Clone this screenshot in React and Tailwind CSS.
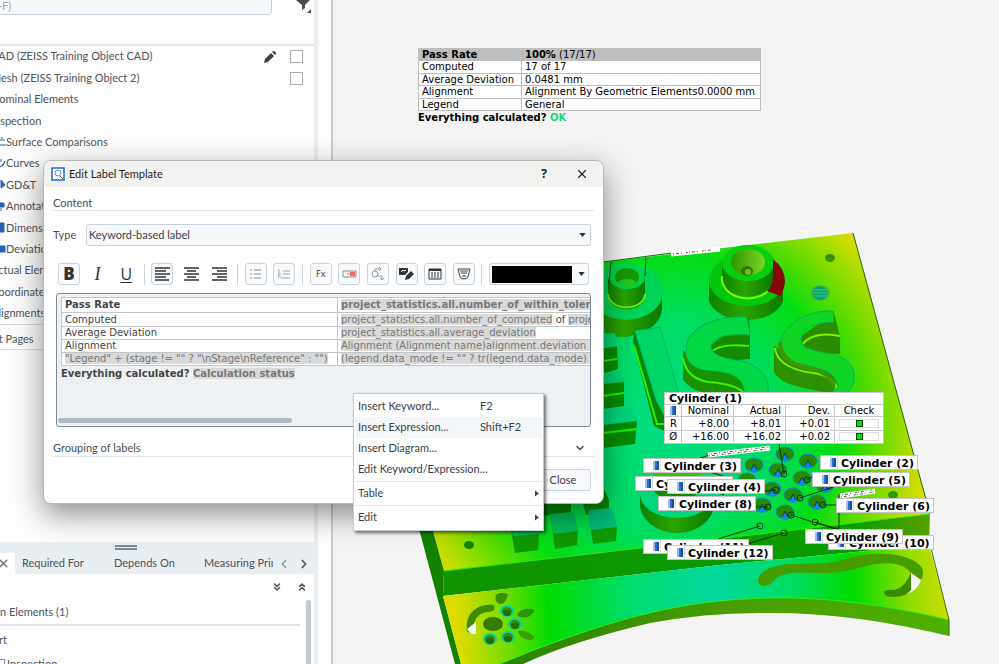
import React, { useState } from 'react';
import { ChevronDown, ChevronLeft, ChevronRight, ChevronsDown, ChevronsUp, X } from 'lucide-react';

const treeItems = [
  { label: 'CAD (ZEISS Training Object CAD)', checkbox: true, editable: true },
  { label: 'Mesh (ZEISS Training Object 2)', checkbox: true },
  { label: 'Nominal Elements' },
  { label: 'Inspection' },
  { label: 'Surface Comparisons', icon: 'M0 3h5M0 8h6M2 0v2' },
  { label: 'Curves', icon: 'M0 9Q4 8 5 3M1 1v3' },
  { label: 'GD&T', icon: 'M1 1l4 5l-4 3z' },
  { label: 'Annotations', icon: 'M0 2h4v4h-4zM1 7v3' },
  { label: 'Dimensions', icon: 'M0 1h4v9h-4z' },
  { label: 'Deviation Labels', icon: 'M0 2h5v6h-5M3 4v2' },
  { label: 'Actual Elements' },
  { label: 'Coordinate Systems' },
  { label: 'Alignments' },
];

const callouts = [
  { label: 'Cylinder (7)', pos: 'left-[302px] top-[476px]' },
  { label: 'Cylinder (3)', pos: 'left-[310px] top-[458px]' },
  { label: 'Cylinder (4)', pos: 'left-[334px] top-[479px]' },
  { label: 'Cylinder (8)', pos: 'left-[325px] top-[496px]' },
  { label: 'Cylinder (2)', pos: 'left-[487px] top-[455px]' },
  { label: 'Cylinder (5)', pos: 'left-[479px] top-[472px]' },
  { label: 'Cylinder (6)', pos: 'left-[503px] top-[498px]' },
  { label: 'Cylinder (10)', pos: 'left-[495px] top-[535px]' },
  { label: 'Cylinder (9)', pos: 'left-[472px] top-[529px]' },
  { label: 'Cylinder (11)', pos: 'left-[310px] top-[539px]' },
  { label: 'Cylinder (12)', pos: 'left-[334px] top-[545px]' },
];

const pits = [
  [785, 454], [808, 461], [754, 465], [778, 470], [802, 478], [747, 480],
  [772, 489], [825, 485], [793, 495], [817, 502], [762, 505], [785, 512],
];

const probes = [
  [784, 474, 779, 444], [807, 480, 814, 476], [776, 490, 757, 492], [800, 498, 833, 487],
  [823, 505, 837, 505], [768, 507, 754, 507], [791, 515, 838, 530], [815, 522, 838, 529],
  [760, 526, 718, 539], [784, 533, 747, 544],
];

const cadIcon = (
  <svg viewBox="0 0 6 9" className="h-[9px] w-[6px] shrink-0">
    <rect x="0" y="0" width="6" height="9" fill="#2b6cc8" />
    <rect x="0" y="0" width="2" height="9" fill="#9dbfea" />
    <rect x="4" y="0" width="2" height="9" fill="#174ea6" />
  </svg>
);

function PartModel() {
  return (
    <svg viewBox="333 0 666 664" className="absolute left-0 top-0 h-[664px] w-[666px]" aria-hidden="true">
      <defs>
        <radialGradient id="plate" gradientUnits="userSpaceOnUse" cx="665" cy="425" r="280">
          <stop offset="0" stopColor="#00dc82" />
          <stop offset="0.38" stopColor="#00dc62" />
          <stop offset="0.62" stopColor="#05dc12" />
          <stop offset="0.76" stopColor="#62dc00" />
          <stop offset="0.95" stopColor="#dcdc00" />
        </radialGradient>
        <linearGradient id="shelf" gradientUnits="userSpaceOnUse" x1="445" y1="640" x2="945" y2="600">
          <stop offset="0.03" stopColor="#dcdc00" />
          <stop offset="0.12" stopColor="#78dc00" />
          <stop offset="0.21" stopColor="#00dc00" />
          <stop offset="0.38" stopColor="#00dc70" />
          <stop offset="0.55" stopColor="#00d89e" />
          <stop offset="0.7" stopColor="#00dc60" />
          <stop offset="0.82" stopColor="#00dc00" />
          <stop offset="0.93" stopColor="#90dc00" />
          <stop offset="1" stopColor="#c8dc00" />
        </linearGradient>
        <linearGradient id="front" x1="0" x2="1" y1="0" y2="0">
          <stop offset="0" stopColor="#109400" />
          <stop offset="0.85" stopColor="#0a9c00" />
          <stop offset="1" stopColor="#5aa000" />
        </linearGradient>
        <linearGradient id="rim" x1="0" x2="1" y1="0" y2="0">
          <stop offset="0" stopColor="#2c8000" />
          <stop offset="0.5" stopColor="#489c00" />
          <stop offset="1" stopColor="#50b000" />
        </linearGradient>
        <linearGradient id="wall" x1="0" x2="1" y1="0" y2="0">
          <stop offset="0" stopColor="#0a8200" />
          <stop offset="0.45" stopColor="#2ca400" />
          <stop offset="1" stopColor="#087800" />
        </linearGradient>
        <linearGradient id="cone" x1="0" x2="1" y1="0" y2="0">
          <stop offset="0" stopColor="#2f9400" />
          <stop offset="1" stopColor="#7cd824" />
        </linearGradient>
      </defs>

      {/* Base body */}
      <path d="M603 262L853 233L930 514L444 571L433 531L410 450Z" fill="url(#plate)" />
      <path d="M603 262L672 253M853 233L930 514" stroke="#1c6a10" strokeWidth="1" fill="none" />
      <path d="M410 495L424 495L433 531L444 571L443 596L461 664L455 664Z" fill="#128200" />
      <path d="M444 571L930 514L929 545L720 565L443 596Z" fill="url(#front)" />
      <path d="M444 571L930 514" stroke="#28e800" strokeWidth="1" />
      <path d="M949 620Q850 596 767 598Q700 599 633 617Q567 635 500 664H523Q570 642 650 623Q710 612 767 613Q850 612 949 636Z" fill="url(#rim)" />
      <path d="M443 596L720 565L929 545L949 620Q850 596 767 598Q700 599 633 617Q567 635 500 664H461Z" fill="url(#shelf)" />
      <path d="M949 620Q850 596 767 598Q700 599 633 617Q567 635 500 664" fill="none" stroke="#20ee10" strokeWidth="1" />
      <path d="M931 548L949 620V636" fill="none" stroke="#397000" strokeWidth="1" />

      {/* Flat boss with pin, back left */}
      <path d="M590 293V314Q598 338 626 337Q662 330 662 307V290Z" fill="url(#wall)" />
      <ellipse cx="626" cy="292" rx="37" ry="28" fill="#00d458" />
      <path d="M608 278V296A18 13 0 0 0 645 296V278Z" fill="url(#wall)" />
      <path d="M608 294A18 13 0 0 0 645 294" fill="none" stroke="#68f000" strokeWidth="2" />
      <ellipse cx="627" cy="277" rx="18" ry="12" fill="#00d24c" />
      <ellipse cx="627" cy="277" rx="12" ry="9" fill="#159800" />
      <ellipse cx="627" cy="283" rx="9" ry="4" fill="#20c826" />
      <path d="M611 262L609 284M646 258L645 276" stroke="#054a10" strokeWidth="1" />

      {/* Countersunk boss, back right */}
      <path d="M709 280V301A38 25 0 0 0 783 301V282Z" fill="url(#wall)" />
      <ellipse cx="747" cy="280" rx="38" ry="26" fill="#00c80c" />
      <path d="M722 262V284A26 17 0 0 0 773 280V262Z" fill="url(#wall)" />
      <path d="M722 276A26 20 0 0 0 768 291" fill="none" stroke="#86f000" strokeWidth="2" />
      <ellipse cx="748" cy="263" rx="26" ry="18" fill="#08ce10" />
      <ellipse cx="748" cy="262" rx="17" ry="13" fill="url(#cone)" />
      <ellipse cx="747" cy="271" rx="6" ry="5" fill="#2c7c00" />
      <ellipse cx="748" cy="272" rx="3" ry="3" fill="#72be20" />
      <path d="M773 259Q785 268 785 282Q784 291 780 296L767 291Q773 285 773 277Z" fill="#870808" />

      {/* Single holes */}
      <ellipse cx="830" cy="258" rx="5" ry="4" fill="#349400" />
      <ellipse cx="820" cy="293" rx="10" ry="8" fill="#3fc428" />
      <ellipse cx="820" cy="293" rx="8" ry="7" fill="#12a068" />
      <path d="M813 290h14M812 293h16M813 296h14" stroke="#28cc98" strokeWidth="1" />
      <ellipse cx="893" cy="495" rx="5" ry="4" fill="#309800" />
      <ellipse cx="469" cy="545" rx="5" ry="4" fill="#128600" />

      {/* Raised lettering: side walls */}
      <path d="M749 318L750 334V359L710 362V346L745 318Z" fill="#168a00" />
      <path d="M749 346Q722 343 712 351" fill="none" stroke="#3cf000" strokeWidth="2" />
      <path d="M683 350V380Q690 389 704 393H745V384L740 372L700 366Z" fill="#189200" />
      <path d="M683 358Q686 378 708 382Q736 384 744 393" fill="none" stroke="#3cf000" strokeWidth="2" />
      <path d="M834 313L840 336V354L800 352L796 340Z" fill="#2c8c00" />
      <path d="M840 336Q812 330 800 347" fill="none" stroke="#80f000" strokeWidth="2" />
      <path d="M774 346V371Q778 382 800 387L832 394L842 370L798 360Z" fill="#2c9000" />
      <path d="M775 348Q777 366 806 372Q832 374 837 388" fill="none" stroke="#74f000" strokeWidth="2" />
      {/* Raised lettering: top faces */}
      <path d="M747 317C722 315 692 325 687 343C682 364 696 370 712 371C732 372 745 379 744 393H768C770 377 759 367 745 362C730 358 712 358 711 346C713 336 732 333 750 335Z" fill="#00d844" stroke="#00ac50" strokeWidth="1" />
      <path d="M833 311C812 310 786 321 781 340C778 355 787 361 800 364C821 368 838 372 838 389L828 394H845C856 388 858 370 847 361C836 352 819 354 805 347C796 338 801 323 834 322Z" fill="#10d424" stroke="#00b45c" strokeWidth="1" />
      <path d="M780 342Q780 362 808 368Q828 371 834 386" fill="none" stroke="#409800" strokeWidth="4" />
      <path d="M633 341L635 331L665 416L664 431L654 426Z" fill="#078400" />
      <path d="M634 345L657 424H664" fill="none" stroke="#26f000" strokeWidth="2" />
      <path d="M635 331L660 327L682 405L665 417L656 400Z" fill="#00d664" stroke="#00b86e" strokeWidth="1" />
      <path d="M603 348L617 346L618 369L603 374Z" fill="#058c00" />
      <path d="M603 334L615 333L618 346L603 348Z" fill="#00d46e" />
      <path d="M603 361L617 359" stroke="#1eee00" strokeWidth="2" />
      <path d="M603 383L624 381V406L603 409Z" fill="#058c00" />
      <path d="M603 373L621 371L624 382L603 384Z" fill="#00d46e" />
      <path d="M603 396L624 393" stroke="#1eee00" strokeWidth="2" />
      <path d="M603 424L637 420L635 444L603 448Z" fill="#058c00" />
      <path d="M603 411L633 408L637 421L603 425Z" fill="#00d47c" />
      <path d="M603 433L637 429" stroke="#1eee00" strokeWidth="2" />

      {/* Front cubes */}
      <path d="M540 500H571V512L545 516ZM582 500H609V509L586 515ZM600 480L609 500V507H600Z" fill="#078600" />
      <path d="M511 530H540V536L513 538Z" fill="#00c852" />
      <path d="M511 530L513 536L539 534L538 550L515 553Z" fill="#109600" />
      <path d="M550 514L578 531L577 545L555 549Z" fill="#109600" />
      <path d="M550 514L574 512L578 531L553 534Z" fill="#00bc5c" />
      <path d="M588 510L617 527L616 541L593 544Z" fill="#0e9a00" />
      <path d="M588 510L612 508L617 527L591 530Z" fill="#00bc78" />

      {/* Ring behind the callouts */}
      <path d="M640 494V504A37 29 0 0 0 714 504V494Z" fill="url(#wall)" />
      <ellipse cx="677" cy="494" rx="37" ry="24" fill="#00d67c" />
      <ellipse cx="677" cy="474" rx="24" ry="14" fill="#3ac400" />
      <path d="M653 476V486A24 15 0 0 0 701 486V476Z" fill="#0c9000" />

      {/* Hole pattern */}
      {pits.map(([cx, cy]) => (
        <g key={`${cx}-${cy}`}>
          <ellipse cx={cx} cy={cy} rx="9" ry="7" fill="#238c00" stroke="#1c84c8" strokeWidth="1" />
          <path d={`M${cx - 5} ${cy + 6}L${cx} ${cy + 1}L${cx + 5} ${cy + 6}L${cx} ${cy + 8}Z`} fill="#1488e0" />
          <path d={`M${cx - 3} ${cy + 5}L${cx} ${cy - 1}L${cx + 3} ${cy + 5}`} fill="none" stroke="#123c64" strokeWidth="1" />
        </g>
      ))}
      <g fill="none" stroke="#04380c" strokeWidth="1">
        {probes.map(([cx, cy, x2, y2]) => (
          <g key={`${cx}-${cy}`}>
            <circle cx={cx} cy={cy} r="3" />
            <path d={`M${cx} ${cy}L${x2} ${y2}`} />
          </g>
        ))}
        <path d="M839 494V530M700 458L713 454M710 472L726 477M710 490L724 495" />
      </g>

      {/* Labels seen edge-on */}
      <g fill="none" strokeWidth="5" stroke="#ffffff">
        <path d="M708 455L770 448" />
        <path d="M840 496L875 491" />
        <path d="M671 254L720 249" />
      </g>
      <g fill="none" strokeWidth="1" stroke="#4a5a4a" strokeDasharray="1 2 3 2 1 4 2 1">
        <path d="M709 456L769 449M711 454L768 447" />
        <path d="M841 497L874 492M842 495L872 490" />
        <path d="M673 254L712 250" />
      </g>

      {/* Hole circle and slot on the shelf */}
      <path d="M491 608Q470 609 470 629" fill="none" stroke="#3d8c00" strokeWidth="7" strokeLinecap="round" />
      <path d="M467 629Q471 626 476 622V634Q470 635 467 629Z" fill="#f4f4f4" />
      <ellipse cx="493" cy="624" rx="10" ry="7" fill="#347c00" />
      <path d="M496 595Q500 591 508 594Q506 605 499 604Q494 601 496 595Z" fill="#3a9000" />
      <path d="M517 614Q521 608 533 609Q536 612 528 617Q519 619 517 614Z" fill="#2b9600" />
      <path d="M518 631Q526 630 534 636Q535 640 529 640Q519 638 518 631Z" fill="#3c9c00" />
      {[[507, 611], [515, 624], [508, 637], [490, 639]].map(([cx, cy]) => (
        <g key={`${cx}-${cy}`}>
          <ellipse cx={cx} cy={cy} rx="6" ry="5" fill="#3c8c00" stroke="#00d2a4" strokeWidth="2" />
          <ellipse cx={cx} cy={cy + 2} rx="4" ry="3" fill="#256c00" />
        </g>
      ))}
      <path d="M758 581C759 570 774 565 790 564C808 563 826 565 842 560C860 554 876 553 888 554C906 555 924 563 923 573Q923 577 921 580L911 573C904 563 890 562 875 564C856 568 842 574 820 573C800 572 784 572 775 579Q771 586 764 586Q759 586 758 581Z" fill="#469c00" />
      <path d="M911 573L921 580Q918 590 907 594Z" fill="#f4f4f4" />
      <path d="M911 573V590Q906 597 894 597Q883 597 884 592Q886 589 893 590Q904 589 911 573Z" fill="#3c8a00" />
    </svg>
  );
}

function Callout({ label, pos }) {
  return (
    <div className={`absolute flex h-[15px] items-center border border-[#c4c4c4] bg-white text-[11px] leading-[15px] font-bold text-black ${pos}`}>
      <span className="flex h-full w-[17px] items-center justify-end border-r border-[#dcdcdc] pr-px">{cadIcon}</span>
      <span className="px-[3px] pt-px whitespace-nowrap">{label}</span>
    </div>
  );
}

function CylinderTable() {
  const rows = [['R', '+8.00', '+8.01', '+0.01'], ['Ø', '+16.00', '+16.02', '+0.02']];
  const cell = 'border border-[#c8c8c8] px-1 leading-[11px]';
  return (
    <table className="absolute left-[331px] top-[392px] h-[52px] w-[219px] table-fixed border-collapse bg-white text-[10px] text-black">
      <colgroup>
        <col className="w-[17px]" />
        <col className="w-[52px]" />
        <col className="w-[52px]" />
        <col className="w-[49px]" />
        <col className="w-[49px]" />
      </colgroup>
      <thead>
        <tr><th colSpan="5" className={`${cell} text-left text-[11px] font-bold`}>Cylinder (1)</th></tr>
        <tr className="text-right">
          <th className={cell}><span className="flex justify-center">{cadIcon}</span></th>
          <th className={`${cell} font-normal`}>Nominal</th>
          <th className={`${cell} font-normal`}>Actual</th>
          <th className={`${cell} font-normal`}>Dev.</th>
          <th className={`${cell} text-center font-normal`}>Check</th>
        </tr>
      </thead>
      <tbody>
        {rows.map((row) => (
          <tr key={row[0]} className="text-right">
            {row.map((value) => <td key={value} className={cell}>{value}</td>)}
            <td className={cell}>
              <div className="flex h-[9px] items-center justify-center border border-[#dcdcdc]">
                <div className="size-[7px] shrink-0 border border-[#064006] bg-[#00e400]" />
              </div>
            </td>
          </tr>
        ))}
      </tbody>
    </table>
  );
}

function ReportTable() {
  const rows = [
    ['Computed', '17 of 17'],
    ['Average Deviation', '0.0481 mm'],
    ['Alignment', 'Alignment By Geometric Elements0.0000 mm'],
    ['Legend', 'General'],
  ];
  const cell = 'border border-[#bebebe] px-[3px] leading-[11px] whitespace-nowrap';
  return (
    <div className="absolute left-[85px] top-[48px] text-[10px] text-black">
      <table className="h-[63px] w-[343px] border-collapse bg-white">
        <thead>
          <tr className="bg-[#bebebe] text-left">
            <th className={`${cell} w-[103px] font-bold`}>Pass Rate</th>
            <th className={`${cell} font-normal`}><b>100%</b> (17/17)</th>
          </tr>
        </thead>
        <tbody>
          {rows.map(([name, value]) => (
            <tr key={name}>
              <td className={cell}>{name}</td>
              <td className={cell}>{value}</td>
            </tr>
          ))}
        </tbody>
      </table>
      <p className="leading-[14px] font-bold">Everything calculated? <span className="text-[#16d47c]">OK</span></p>
    </div>
  );
}

function Sidebar() {
  return (
    <aside className="flex w-[333px] shrink-0 overflow-hidden border-r-2 border-[#c3ced8] bg-[#fdfdfd] text-[11px] text-[#4f5459]">
      <div className="flex w-[318px] shrink-0 flex-col border-r-4 border-[#e9eef2]">
        <div className="flex h-[44px] shrink-0 items-start overflow-hidden">
          <input
            aria-label="Search"
            placeholder="Search (Ctrl+F)"
            className="-mt-3 -ml-[67px] h-[27px] w-[339px] rounded-sm border border-[#c6d2dd] bg-[#f6f8fa] pt-2 pl-[6px] placeholder:text-[#a2a7ab]"
          />
          <svg viewBox="0 0 16 13" className="ml-6 h-[13px] w-[16px]" fill="#4b4b4b">
            <path d="M0 0H14L9 5V8L6 10V5ZM15 9V13H11Z" />
          </svg>
        </div>
        <div className="grid h-[280px] shrink-0 auto-rows-fr border-t-2 border-[#e1e7ed]">
          {treeItems.map((item) => (
            <div key={item.label} className="flex items-center overflow-hidden whitespace-nowrap">
              {item.icon && (
                <svg viewBox="0 0 6 11" className="h-[11px] w-[6px] shrink-0" fill="#2463b4" stroke="#2463b4">
                  <path d={item.icon} />
                </svg>
              )}
              <span className={item.icon ? 'grow' : '-ml-[9px] grow'}>{item.label}</span>
              {item.editable && (
                <svg viewBox="0 0 12 12" className="mr-[14px] size-3" fill="#424242">
                  <path d="M0 12L1 8L7 2L10 5L4 11ZM8 1L9 0Q12 0 12 3L11 4Z" />
                </svg>
              )}
              {item.checkbox && (
                <input type="checkbox" aria-label={item.label} className="mr-[11px] size-[13px] appearance-none border border-[#b0b0b0] bg-white" />
              )}
            </div>
          ))}
        </div>
        <div className="flex h-[26px] shrink-0 items-center border-y border-[#d3dde6] whitespace-nowrap">
          <span className="-ml-[30px] pt-1">Report Pages</span>
        </div>
        <div className="h-[192px] shrink-0" />
        <div className="flex h-[32px] shrink-0 flex-col bg-[#e9eef2]">
          <div className="mt-[3px] ml-[115px] h-[5px] w-[22px] shrink-0 border-y-2 border-[#7d8890]" />
          <div className="mt-[3px] flex grow items-center whitespace-nowrap">
            <button aria-label="Close tab" className="flex h-full w-[15px] shrink-0 items-center bg-[#fdfdfd]"><X className="-ml-[3px] size-[13px] text-[#73808a]" strokeWidth={3} /></button>
            <button className="w-[92px] shrink-0 pl-[7px] text-left">Required For</button>
            <button className="w-[90px] shrink-0 pl-[7px] text-left">Depends On</button>
            <button className="w-[76px] shrink-0 overflow-hidden pl-[7px] text-left">Measuring Principle</button>
            <button aria-label="Previous tabs" className="ml-1"><ChevronLeft className="size-[14px] text-[#878c90]" /></button>
            <button aria-label="Next tabs" className="ml-[6px]"><ChevronRight className="size-[14px]" strokeWidth={3} /></button>
          </div>
        </div>
        <div className="flex h-[26px] shrink-0 items-center justify-end gap-[13px] pr-[6px]">
          <button aria-label="Expand all"><ChevronsDown className="size-3" strokeWidth={3} /></button>
          <button aria-label="Collapse all"><ChevronsUp className="size-3" strokeWidth={3} /></button>
        </div>
        <div className="flex grow">
          <div className="flex w-[300px] flex-col">
            <div className="flex h-[26px] shrink-0 items-center border-b-2 border-[#dde2ec]">n Elements (1)</div>
            <div className="-ml-[13px] flex h-[28px] shrink-0 items-center">Part</div>
            <div className="flex h-[20px] shrink-0 items-center whitespace-nowrap">
              <span className="-ml-[6px] size-[11px] border border-[#8c8c8c]" />
              <span className="ml-[2px]">Inspection</span>
            </div>
          </div>
          <div className="ml-[6px] min-h-[64px] w-[5px] rounded-t-full bg-[#c2c8cd]" />
        </div>
      </div>
    </aside>
  );
}

const plain = 'flex size-[22px] shrink-0 items-center justify-center';
const boxed = 'flex size-[22px] shrink-0 items-center justify-center rounded-[3px] border border-[#c9d4de] bg-[#f7f9fb]';

function Lines({ align }) {
  const paths = {
    left: 'M0 1H15M0 4H11M0 7H15M0 10H11M0 13H14',
    center: 'M0 1H15M3 4H12M0 7H15M3 10H12M0 13H15',
    right: 'M0 1H15M5 4H15M0 7H15M5 10H15M0 13H15',
  };
  return (
    <svg viewBox="0 0 15 15" className="size-[15px]" stroke="#333" strokeWidth="1.5" fill="none"><path d={paths[align]} /></svg>
  );
}

function Toolbar() {
  const divider = <span className="h-[21px] w-px shrink-0 bg-[#c9d4de]" />;
  return (
    <div className="flex items-center justify-between text-[#333]">
      <button aria-label="Bold" className={`${boxed} font-['Open_Sans'] text-[17px] leading-5 font-extrabold`}>B</button>
      <button aria-label="Italic" className={`${plain} font-['Liberation_Serif'] text-[18px] leading-5 italic`}>I</button>
      <button aria-label="Underline" className={`${plain} font-['Open_Sans'] text-[16px] leading-5 underline underline-offset-2`}>U</button>
      {divider}
      <button aria-label="Align left" className={boxed}><Lines align="left" /></button>
      <button aria-label="Align center" className={plain}><Lines align="center" /></button>
      <button aria-label="Align right" className={plain}><Lines align="right" /></button>
      {divider}
      <button aria-label="Bullet list" className={boxed}>
        <svg viewBox="0 0 12 12" className="size-3" stroke="#8a8f94" fill="none"><path d="M0 2H2M0 6H2M0 10H2M4 2H11M4 6H11M4 10H11" /></svg>
      </button>
      <button aria-label="Numbered list" className={boxed}>
        <svg viewBox="0 0 12 12" className="size-3" stroke="#a0a5aa" fill="none"><path d="M1 1V4M0 5H2V7H0V9H3M5 3H12M5 6H12M3 10H12" /></svg>
      </button>
      {divider}
      <button aria-label="Insert expression" className={`${boxed} font-['Open_Sans'] text-[9px]`}>Fx</button>
      <button aria-label="Insert field" className={boxed}>
        <svg viewBox="0 0 15 8" className="h-2 w-[15px]" fill="none" stroke="#8b8b8b"><path d="M1 1H14V7H1ZM5 4H8" /><rect x="8" y="2" width="5" height="4" fill="#f66" stroke="none" /></svg>
      </button>
      <button aria-label="Insert diagram" className={boxed}>
        <svg viewBox="0 0 14 14" className="size-[14px]" fill="none" stroke="#999"><circle cx="4" cy="7" r="3" /><path d="M4 4V2H10M8 0L10 2L8 4M7 9H11V13M9 11L11 13L13 11" /></svg>
      </button>
      <button aria-label="Edit keyword" className={boxed}>
        <svg viewBox="0 0 15 14" className="h-[14px] w-[15px]" fill="#333"><path d="M0 1H9V5L6 8H0Z" /><path d="M2 5L4 3L5 4L7 3" stroke="#fff" fill="none" /><path d="M6 13L7 9L12 4L15 7L10 12Z" /></svg>
      </button>
      <button aria-label="Insert table" className={boxed}>
        <svg viewBox="0 0 14 12" className="h-3 w-[14px]" fill="none" stroke="#333"><path d="M1 1H13V11H1Z" /><path d="M1 2H13" strokeWidth="2" /><path d="M3 5H12M3 7H12M3 9H12" strokeDasharray="2 1" /></svg>
      </button>
      <button aria-label="Insert tolerance" className={boxed}>
        <svg viewBox="0 0 14 12" className="h-3 w-[14px]" fill="none" stroke="#444"><path d="M1 1H13L11 9Q7 13 3 9Z" /><path d="M3 3H11M4 5H10M5 8H9" /></svg>
      </button>
      {divider}
      <button aria-label="Text color" className="flex h-[22px] w-[100px] items-center gap-[6px] rounded-[3px] border border-[#c9d4de] bg-[#f7f9fb] px-[2px]">
        <span className="h-[17px] w-[80px] bg-black" />
        <svg viewBox="0 0 8 5" className="h-[4px] w-[7px]" fill="#333"><path d="M0 0H8L4 5Z" /></svg>
      </button>
    </div>
  );
}

function Editor() {
  const left = 'border border-[#c2c6ca] bg-white px-[3px] whitespace-nowrap';
  const mark = 'bg-[#d9d9d9] text-[#777]';
  return (
    <div className="flex h-[134px] flex-col justify-between overflow-hidden rounded-[3px] border border-[#7d8b99] bg-[#edf1f4] px-px pt-[3px] pb-[3px] text-[10px] text-[#444]">
      <div className="pl-[3px]">
        <table className="w-[620px] table-fixed border-collapse">
          <colgroup>
            <col className="w-[276px]" />
            <col />
          </colgroup>
          <tbody className="leading-[12px]">
            <tr className="h-[15px] font-bold">
              <td className={left}>Pass Rate</td>
              <td className={left}><span className={mark}>project_statistics.all.number_of_within_tolerance</span></td>
            </tr>
            <tr className="h-[14px]">
              <td className={left}>Computed</td>
              <td className={left}><span className={mark}>project_statistics.all.number_of_computed</span> of <span className={mark}>project_statistics</span></td>
            </tr>
            <tr className="h-[13px]">
              <td className={left}>Average Deviation</td>
              <td className={left}><span className={mark}>project_statistics.all.average_deviation</span></td>
            </tr>
            <tr className="h-[13px]">
              <td className={left}>Alignment</td>
              <td className={left}><span className={mark}>Alignment (Alignment name)alignment.deviation != 0 ? deviation</span></td>
            </tr>
            <tr className="h-[13px]">
              <td className={left}><span className={mark}>"Legend" + (stage != "" ? "\nStage\nReference" : "")</span></td>
              <td className={left}><span className={mark}>(legend.data_mode != "" ? tr(legend.data_mode) : "")</span></td>
            </tr>
          </tbody>
        </table>
        <p className="leading-[15px] font-bold">Everything calculated? <span className={mark}>Calculation status</span></p>
      </div>
      <div className="h-[5px] w-[234px] rounded-full bg-[#b0bac2]" />
    </div>
  );
}

function ContextMenu() {
  const item = 'flex h-[21px] items-center px-[3px] text-left';
  const arrow = <svg viewBox="0 0 4 6" className="ml-auto h-[7px] w-[4px]" fill="#444"><path d="M0 0L4 3L0 6Z" /></svg>;
  return (
    <div role="menu" className="absolute top-[393px] left-[353px] flex w-[191px] flex-col border border-[#c3cdd6] bg-white px-px py-[2px] text-[11px] text-[#3c4046] shadow-[2px_2px_3px_rgba(0,0,0,0.55)]">
      <button role="menuitem" className={item}><span className="w-[122px]">Insert Keyword...</span>F2</button>
      <button role="menuitem" className={`${item} bg-[#f3f7fa]`}><span className="w-[122px]">Insert Expression...</span>Shift+F2</button>
      <button role="menuitem" className={item}>Insert Diagram...</button>
      <button role="menuitem" className={item}>Edit Keyword/Expression...</button>
      <div className="my-px h-px bg-[#e4e8ec]" />
      <button role="menuitem" className={item}>Table{arrow}</button>
      <div className="my-px h-px bg-[#e4e8ec]" />
      <button role="menuitem" className={item}>Edit{arrow}</button>
    </div>
  );
}

function LabelDialog() {
  const [type, setType] = useState('keyword');
  return (
    <div role="dialog" aria-label="Edit Label Template" className="absolute top-[160px] left-[43px] flex w-[561px] flex-col overflow-hidden rounded-lg border border-[#b8b8b8] bg-white text-[11px] text-[#4a4e53] shadow-[0_10px_30px_rgba(0,0,0,0.45)]">
      <header className="flex h-[26px] items-center bg-[#f2f2f1] pr-[14px] pl-[7px] text-[#222]">
        <svg viewBox="0 0 14 14" className="mr-1 size-[14px]" fill="none" stroke="#2563eb">
          <rect x="1" y="1" width="12" height="12" fill="#fff" strokeWidth="1.5" />
          <circle cx="7" cy="6" r="3" stroke="#5a8cf0" />
          <path d="M9 9L12 12" stroke="#555" />
        </svg>
        <h1 className="grow">Edit Label Template</h1>
        <button aria-label="Help" className="mr-[28px] font-['Open_Sans'] text-[12px] font-bold">?</button>
        <button aria-label="Close dialog"><X className="size-[14px]" /></button>
      </header>
      <div className="flex flex-col px-[9px]">
        <h2 className="mt-[9px] flex h-[15px] items-center border-b border-[#dde6ee]">Content</h2>
        <div className="mt-[13px] flex items-center pr-[3px]">
          <label htmlFor="label-type" className="w-[33px]">Type</label>
          <div className="flex grow items-center rounded-[3px] border border-[#c6d2dd] bg-[#f6f8fa]">
            <select
              id="label-type"
              value={type}
              onChange={(e) => setType(e.target.value)}
              className="h-[20px] grow appearance-none px-[2px] text-[#3c4046] outline-none"
            >
              <option value="keyword">Keyword-based label</option>
            </select>
            <svg viewBox="0 0 8 5" className="mr-1 h-[4px] w-[7px]" fill="#333"><path d="M0 0H8L4 5Z" /></svg>
          </div>
        </div>
        <div className="mt-[17px] pr-[5px] pl-[5px]"><Toolbar /></div>
        <div className="mt-[8px] pr-[3px] pl-[3px] font-['DejaVu_Sans']"><Editor /></div>
        <div className="mt-[13px] flex h-[17px] items-center border-b border-[#dde6ee]">
          <h2 className="grow">Grouping of labels</h2>
          <button aria-label="Expand grouping"><ChevronDown className="mr-[8px] size-3" strokeWidth={3} /></button>
        </div>
        <div className="mt-[12px] mb-[12px] flex justify-end pr-[3px]">
          <button className="h-[22px] w-[56px] rounded-[3px] border border-[#c6d2dd] bg-[#f7f9fb] text-[#3c4046]">Close</button>
        </div>
      </div>
    </div>
  );
}

export default function App() {
  return (
    <div className="relative flex h-screen overflow-hidden bg-[#f4f4f4] font-['Lato','Open_Sans',sans-serif]">
      <Sidebar />
      <main className="relative grow overflow-hidden font-['DejaVu_Sans',sans-serif]">
        <PartModel />
        <ReportTable />
        {callouts.map((c) => <Callout key={c.label} {...c} />)}
        <CylinderTable />
      </main>
      <LabelDialog />
      <ContextMenu />
    </div>
  );
}
